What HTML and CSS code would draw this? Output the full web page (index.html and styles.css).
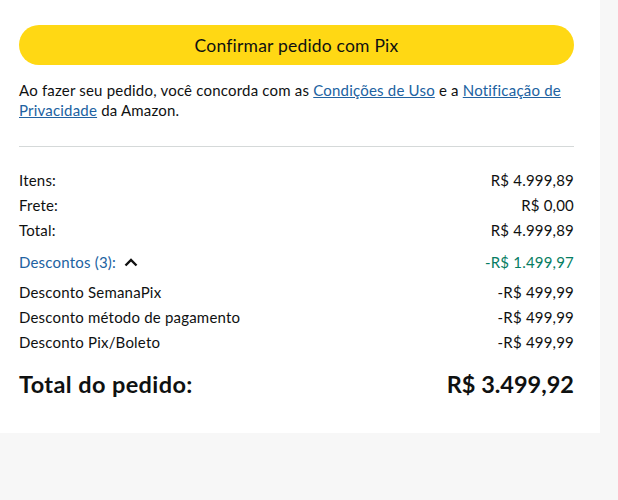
FILE: index.html
```html
<!DOCTYPE html>
<html lang="pt-BR">
<head>
<meta charset="utf-8">
<link rel="stylesheet" href="styles.css">
</head>
<body>
<div class="panel">
  <button class="confirm">Confirmar pedido com Pix</button>
  <p class="terms">Ao fazer seu pedido, você concorda com as <a href="#">Condições de Uso</a> e a <a href="#">Notificação de Privacidade</a> da Amazon.</p>
  <hr class="divider">
  <div class="rows">
    <div class="row"><span>Itens:</span><span>R$ 4.999,89</span></div>
    <div class="row"><span>Frete:</span><span>R$ 0,00</span></div>
    <div class="row"><span>Total:</span><span>R$ 4.999,89</span></div>
    <div class="row disc-head">
      <span class="disc-link">Descontos (3):
        <svg class="chev" width="14" height="9" viewBox="0 0 14 9"><path d="M1.5 7.5 L7 2 L12.5 7.5" fill="none" stroke="#111" stroke-width="2.4"/></svg>
      </span>
      <span class="green">-R$ 1.499,97</span>
    </div>
    <div class="row"><span>Desconto SemanaPix</span><span>-R$ 499,99</span></div>
    <div class="row"><span>Desconto método de pagamento</span><span>-R$ 499,99</span></div>
    <div class="row"><span>Desconto Pix/Boleto</span><span>-R$ 499,99</span></div>
  </div>
  <div class="grand"><span class="grand-label">Total do pedido:</span><span>R$ 3.499,92</span></div>
</div>
</body>
</html>
```
FILE: styles.css
```css
html, body { margin: 0; padding: 0; }
body {
  background: #f7f7f7;
  font-family: "Lato", "Open Sans", sans-serif;
  color: #0f1111;
  width: 618px;
  height: 500px;
  overflow: hidden;
}
.panel {
  width: 600px;
  box-sizing: border-box;
  background: #fff;
  padding: 25px 26px 34px 19px;
}
.confirm {
  display: block;
  width: 100%;
  height: 40px;
  border: none;
  border-radius: 20px;
  background: #ffd814;
  color: #0f1111;
  font-family: inherit;
  font-size: 17.5px;
  letter-spacing: 0.2px;
  padding: 0;
}
.terms {
  margin: 15px 0 0;
  font-size: 15px;
  letter-spacing: 0.2px;
  line-height: 20px;
}
.terms a { color: #2162a1; text-decoration: underline; }
.divider {
  border: none;
  border-top: 1px solid #d5d9d9;
  margin: 26px 0 0;
}
.rows { padding-top: 21px; }
.row {
  display: flex;
  justify-content: space-between;
  font-size: 15px;
  letter-spacing: 0.2px;
  line-height: 25px;
}
.disc-head { margin: 7px 0 5px; }
.disc-link { color: #2162a1; display: inline-flex; align-items: center; gap: 8px; }
.green { color: #067d62; }
.grand {
  display: flex;
  justify-content: space-between;
  font-size: 23.5px;
  font-weight: 700;
  margin-top: 14px;
  line-height: 30px;
}
.grand-label { letter-spacing: 0.4px; }
```
